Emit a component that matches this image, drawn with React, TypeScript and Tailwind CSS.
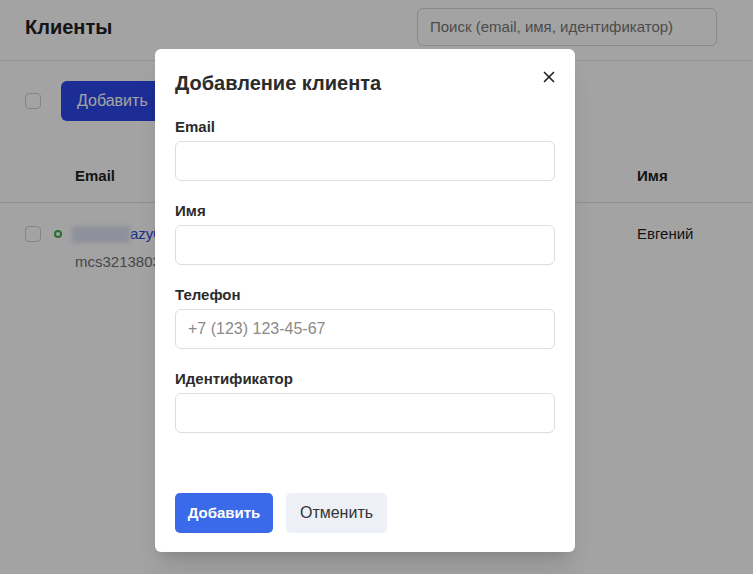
import React from 'react';
import { X } from 'lucide-react';

const font = { fontFamily: '"Liberation Sans", Arial, sans-serif' };

function Field({ label, placeholder }: { label: string, placeholder?: string }) {
  return (
    <div>
      <label className="block text-[15px] leading-5 font-bold text-[#2b2b2b] mb-1">{label}</label>
      <input
        type="text"
        placeholder={placeholder}
        className="w-full h-10 px-3 rounded-md border border-[#dcdce6] bg-white text-[16px] text-[#333] placeholder:text-[#8a8a8a] outline-none"
      />
    </div>
  );
}

export default function App() {
  return (
    <div className="relative w-full h-[574px] overflow-hidden bg-white text-[#222]" style={font}>
      {/* page under the modal */}
      <div className="flex items-center h-[61px] pb-[7px] border-b border-[#e2e2e2] pl-[25px] pr-[36px]">
        <h1 className="text-[20px] font-bold text-[#222]">Клиенты</h1>
        <input
          type="text"
          placeholder="Поиск (email, имя, идентификатор)"
          className="ml-auto w-[300px] h-[38px] px-3 rounded-md border border-[#d6d6d6] text-[15px] placeholder:text-[#777] outline-none"
        />
      </div>

      <div className="flex items-center gap-5 pl-[25px] h-[80px]">
        <span className="w-4 h-4 rounded border border-[#cfcfcf] bg-white" />
        <button className="h-10 px-4 rounded-md bg-[#2c49e9] text-white text-[16px]">Добавить</button>
      </div>

      <div className="flex items-end h-[62px] pb-4 border-b border-[#e0e0e0] text-[15px] leading-5 font-bold">
        <span className="pl-[75px] w-[637px]">Email</span>
        <span>Имя</span>
      </div>

      <div className="flex pt-[21px] text-[15px]">
        <div className="w-[637px] flex items-start">
          <span className="mt-[2px] ml-[25px] w-4 h-4 rounded border border-[#cfcfcf] bg-white shrink-0" />
          <div className="ml-[13px] mt-[6px] w-[8px] h-[8px] rounded-full border-2 border-[#3cae48] shrink-0" />
          <div className="ml-[13px]">
            <div className="flex items-center leading-5">
              <span className="inline-block -ml-[3px] w-[58px] h-[17px] bg-[#dfe3f3] blur-[2px]" />
              <span className="text-[#2948d8]">azy0@mail.ru</span>
            </div>
            <div className="mt-[8px] leading-5 text-[#707070]">mcs321380372</div>
          </div>
        </div>
        <div className="leading-5">Евгений</div>
      </div>

      {/* overlay */}
      <div className="absolute inset-0 bg-black/[0.36]" />

      {/* modal */}
      <div className="absolute left-[155px] top-[49px] w-[420px] bg-white rounded-md shadow-xl px-5 pt-5 pb-[19px]">
        <button className="absolute top-[19px] right-[17px] text-[#222]">
          <X size={18} strokeWidth={2.2} />
        </button>
        <h2 className="text-[20px] leading-7 font-bold text-[#2b2b2b]">Добавление клиента</h2>
        <div className="mt-5 flex flex-col gap-5">
          <Field label="Email" />
          <Field label="Имя" />
          <Field label="Телефон" placeholder="+7 (123) 123-45-67" />
          <Field label="Идентификатор" />
        </div>
        <div className="mt-[60px] flex gap-[13px]">
          <button className="h-10 w-[98px] rounded-[5px] bg-[#3a6ae9] text-white text-[15px] font-semibold">Добавить</button>
          <button className="h-10 w-[101px] rounded-[5px] bg-[#edf0f7] text-[#333] text-[16px]">Отменить</button>
        </div>
      </div>
    </div>
  );
}
